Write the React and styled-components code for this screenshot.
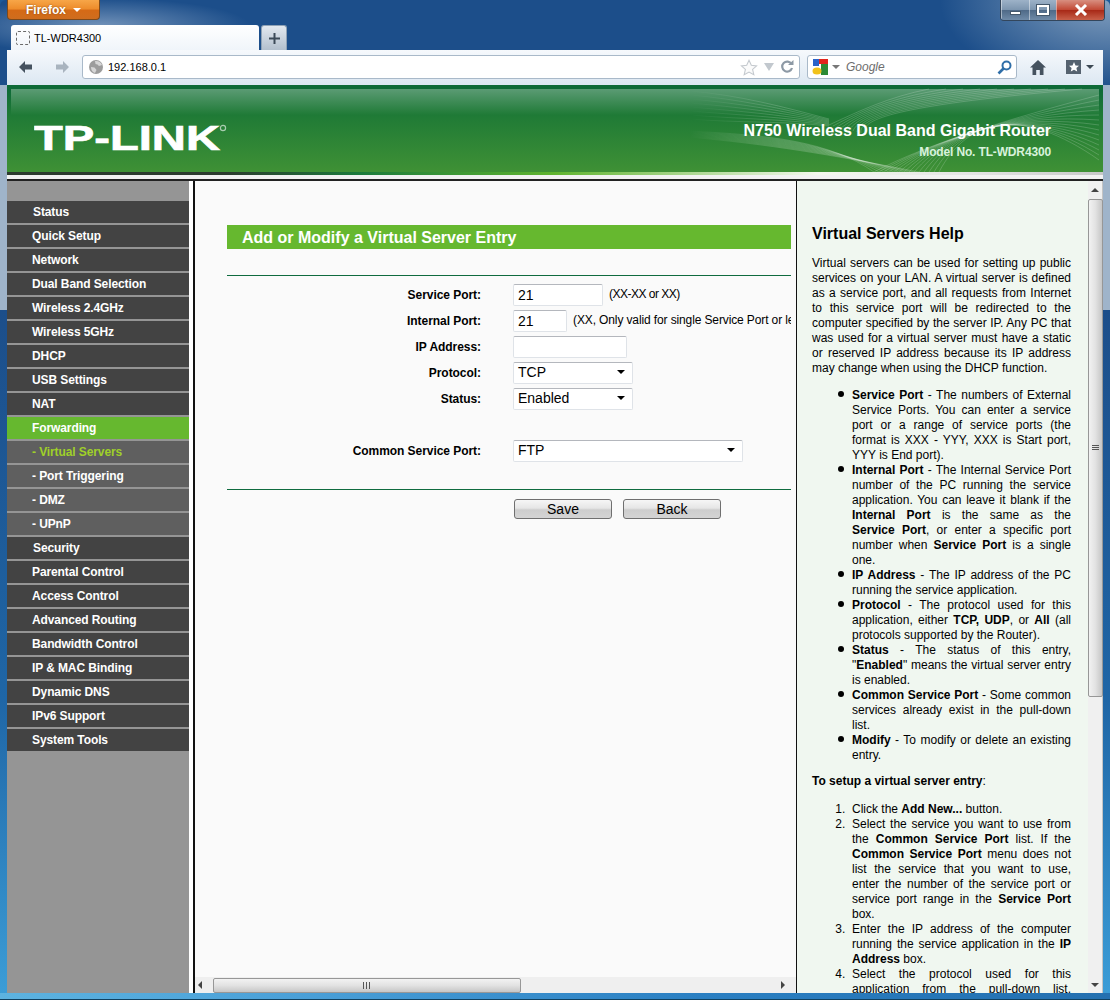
import React from 'react'
import styled, { createGlobalStyle } from 'styled-components'

const GlobalStyle = createGlobalStyle`
  html, body { margin: 0; padding: 0; background: #1c5a9a; }
  body { font-family: "Liberation Sans", Arial, sans-serif; font-size: 12px; color: #000; }
  * { box-sizing: border-box; }
`

const menuItems = [
  { label: 'Status', nudge: true },
  { label: 'Quick Setup' },
  { label: 'Network' },
  { label: 'Dual Band Selection' },
  { label: 'Wireless 2.4GHz' },
  { label: 'Wireless 5GHz' },
  { label: 'DHCP' },
  { label: 'USB Settings' },
  { label: 'NAT' },
  { label: 'Forwarding', kind: 'active' },
  { label: '- Virtual Servers', kind: 'current' },
  { label: '- Port Triggering', kind: 'sub' },
  { label: '- DMZ', kind: 'sub' },
  { label: '- UPnP', kind: 'sub' },
  { label: 'Security', nudge: true },
  { label: 'Parental Control' },
  { label: 'Access Control' },
  { label: 'Advanced Routing' },
  { label: 'Bandwidth Control' },
  { label: 'IP & MAC Binding' },
  { label: 'Dynamic DNS' },
  { label: 'IPv6 Support' },
  { label: 'System Tools' },
]

function App() {
  return (
    <Window>
      <GlobalStyle />
      <TitleRow>
        <FirefoxButton>Firefox<Caret $color="#fff" /></FirefoxButton>
        <CaptionButtons>
          <CaptionButton $width={28}><MinimizeGlyph /></CaptionButton>
          <CaptionButton $width={27}><RestoreGlyph /></CaptionButton>
          <CaptionButton $width={48} $close>
            <svg width="16" height="12" viewBox="0 0 16 12">
              <path d="M3 1 L13 11 M13 1 L3 11" stroke="#fff" strokeWidth="3" />
            </svg>
          </CaptionButton>
        </CaptionButtons>
      </TitleRow>

      <TabRow>
        <Tab><BlankFavicon />TL-WDR4300</Tab>
        <NewTab>
          <svg width="11" height="11" viewBox="0 0 11 11">
            <path d="M5.5 0 V11 M0 5.5 H11" stroke="#3c4a58" strokeWidth="2" />
          </svg>
        </NewTab>
      </TabRow>

      <NavBar>
        <NavArrow viewBox="0 0 14 12" width="14" height="12">
          <path d="M0 6 L6 0 V3.5 H13 V8.5 H6 V12 Z" fill="#45525f" />
        </NavArrow>
        <NavArrow viewBox="0 0 14 12" width="14" height="12">
          <path d="M14 6 L8 0 V3.5 H1 V8.5 H8 V12 Z" fill="#a9b4bf" />
        </NavArrow>
        <UrlBar>
          <svg width="14" height="14" viewBox="0 0 14 14">
            <circle cx="7" cy="7" r="7" fill="#9c9c9c" />
            <path d="M6 1 C9 0.5 12 2 13 5 L10 6 L8.5 4.5 L6.5 4 Z M2 7 L5.5 7.5 L7.5 10 L6 13 C3.5 12.5 2 10 2 7 Z" fill="#d6d6d6" />
          </svg>
          <UrlText>192.168.0.1</UrlText>
          <svg width="18" height="17" viewBox="0 0 20 19">
            <path d="M10 1.5 L12.6 7 L18.5 7.7 L14 11.7 L15.4 17.5 L10 14.6 L4.6 17.5 L6 11.7 L1.5 7.7 L7.4 7 Z" fill="#fbfbfb" stroke="#c4c9ce" strokeWidth="1.2" />
          </svg>
          <svg width="10" height="8" viewBox="0 0 10 8">
            <path d="M0 0 H10 L5 8 Z" fill="#c2c8ce" />
          </svg>
          <svg width="14" height="14" viewBox="0 0 14 14">
            <path d="M11.5 4 A5 5 0 1 0 12 8" fill="none" stroke="#8d99a5" strokeWidth="2.2" />
            <path d="M8 5 H13.5 V0 Z" fill="#8d99a5" />
          </svg>
        </UrlBar>
        <SearchBar>
          <svg width="16" height="16" viewBox="0 0 16 16">
            <rect x="6" y="0" width="10" height="5" fill="#e2241c" />
            <rect x="9" y="5" width="7" height="11" fill="#2c8a35" />
            <rect x="1" y="0" width="6" height="7" fill="#2a63c8" />
            <ellipse cx="5" cy="12" rx="4.5" ry="3.5" fill="#f1c21b" />
          </svg>
          <Caret $color="#777" />
          <SearchHint>Google</SearchHint>
          <svg width="15" height="15" viewBox="0 0 15 15">
            <circle cx="9.5" cy="5.5" r="4" fill="none" stroke="#2f6ea8" strokeWidth="2" />
            <path d="M6.5 8.5 L1.5 13.5" stroke="#2f6ea8" strokeWidth="2.6" />
          </svg>
        </SearchBar>
        <ToolIcons>
          <svg width="16" height="15" viewBox="0 0 16 15">
            <path d="M8 0 L16 7.5 H13.5 V15 H9.8 V10 H6.2 V15 H2.5 V7.5 H0 Z" fill="#45525f" />
          </svg>
          <BookmarkButton>
            <svg width="15" height="14" viewBox="0 0 15 14">
              <rect width="15" height="14" fill="#55626f" />
              <path d="M8 2 L9.5 5.4 L13 5.7 L10.4 8 L11.2 11.5 L8 9.7 L4.8 11.5 L5.6 8 L3 5.7 L6.5 5.4 Z" fill="#fff" />
            </svg>
            <Caret $color="#3d4954" />
          </BookmarkButton>
        </ToolIcons>
      </NavBar>

      <Banner>
        <Waves viewBox="0 0 410 87" width="410" height="87">
          {Array.from({ length: 14 }, (_, i) => (
            <path key={'a' + i} d={`M${185 + i * 5} 87 C${240 + i * 3} ${58 - i * 2}, ${320 + i} ${34 - i}, 410 ${10 + i * 5}`} />
          ))}
          {Array.from({ length: 10 }, (_, i) => (
            <path key={'b' + i} d={`M0 ${46 + i * 0.7} C80 ${50 + i}, 140 ${56 + i * 1.5}, ${185 + i * 5} 87`} />
          ))}
          {Array.from({ length: 8 }, (_, i) => (
            <path key={'c' + i} d={`M0 ${6 + i * 4} C50 ${10 + i * 4}, 95 ${22 + i * 2}, 140 ${34 + i}`} />
          ))}
          {Array.from({ length: 10 }, (_, i) => (
            <path key={'d' + i} d={`M${140 + i * 4} ${40 + i} C170 ${26 + i}, 200 ${12 + i}, ${240 + i * 17} 4`} />
          ))}
        </Waves>
        <Logo viewBox="0 0 200 30" width="200" height="30">
          <text x="0" y="27.5" textLength="186" lengthAdjust="spacingAndGlyphs" fontFamily="Liberation Sans, Arial, sans-serif" fontWeight="700" fontSize="35" fill="#fff" stroke="#fff" strokeWidth="0.7">TP-LINK</text>
          <circle cx="189" cy="6" r="2.6" fill="none" stroke="#a9cdb0" strokeWidth="1.2" />
        </Logo>
        <Product>
          <ProductName>N750 Wireless Dual Band Gigabit Router</ProductName>
          <ModelNo>Model No. TL-WDR4300</ModelNo>
        </Product>
      </Banner>
      <BannerEdge />
      <BannerGap />

      <Frames>
        <Menu>
          {menuItems.map((item) => (
            <MenuItem key={item.label} $kind={item.kind} $nudge={item.nudge}>{item.label}</MenuItem>
          ))}
        </Menu>

        <MainFrame>
          <MainContent>
            <EntryTitle>Add or Modify a Virtual Server Entry</EntryTitle>
            <Rule />
            <FormGrid>
              <FieldLabel>Service Port:</FieldLabel>
              <FieldCell>
                <TextInput $width={90} defaultValue="21" />
                <Hint $tight>(XX-XX or XX)</Hint>
              </FieldCell>
              <FieldLabel>Internal Port:</FieldLabel>
              <FieldCell>
                <TextInput $width={54} defaultValue="21" />
                <Hint>(XX, Only valid for single Service Port or leave blank)</Hint>
              </FieldCell>
              <FieldLabel>IP Address:</FieldLabel>
              <FieldCell><TextInput $width={114} /></FieldCell>
              <FieldLabel>Protocol:</FieldLabel>
              <FieldCell><SelectBox $width={120}>TCP<Caret $color="#000" /></SelectBox></FieldCell>
              <FieldLabel>Status:</FieldLabel>
              <FieldCell><SelectBox $width={120}>Enabled<Caret $color="#000" /></SelectBox></FieldCell>
              <BlankRow />
              <FieldLabel>Common Service Port:</FieldLabel>
              <FieldCell><SelectBox $width={230}>FTP<Caret $color="#000" /></SelectBox></FieldCell>
            </FormGrid>
            <Rule $gap={23} />
            <ButtonRow>
              <PageButton>Save</PageButton>
              <PageButton>Back</PageButton>
            </ButtonRow>
          </MainContent>
          <HScrollbar>
            <ArrowLeft />
            <HThumb><GripV /><GripV /><GripV /></HThumb>
            <HSpacer />
            <ArrowRight />
          </HScrollbar>
        </MainFrame>

        <HelpFrame>
          <HelpContent>
            <HelpTitle>Virtual Servers Help</HelpTitle>
            <HelpPara>
              Virtual servers can be used for setting up public services on your LAN. A virtual server is defined as a service port, and all requests from Internet to this service port will be redirected to the computer specified by the server IP. Any PC that was used for a virtual server must have a static or reserved IP address because its IP address may change when using the DHCP function.
            </HelpPara>
            <HelpBullets>
              <li><b>Service Port</b> - The numbers of External Service Ports. You can enter a service port or a range of service ports (the format is XXX - YYY, XXX is Start port, YYY is End port).</li>
              <li><b>Internal Port</b> - The Internal Service Port number of the PC running the service application. You can leave it blank if the <b>Internal Port</b> is the same as the <b>Service&nbsp;Port</b>, or enter a specific port number when <b>Service Port</b> is a single one.</li>
              <li><b>IP Address</b> - The IP address of the PC running the service application.</li>
              <li><b>Protocol</b> - The protocol used for this application, either <b>TCP, UDP</b>, or <b>All</b> (all protocols supported by the Router).</li>
              <li><b>Status</b> - The status of this entry, "<b>Enabled</b>" means the virtual server entry is enabled.</li>
              <li><b>Common Service Port</b> - Some common services already exist in the pull-down list.</li>
              <li><b>Modify</b> - To modify or delete an existing entry.</li>
            </HelpBullets>
            <HelpSubhead><b>To setup a virtual server entry</b>:</HelpSubhead>
            <HelpSteps>
              <li>Click the <b>Add New...</b> button.</li>
              <li>Select the service you want to use from the <b>Common Service Port</b> list. If the <b>Common Service Port</b> menu does not list the service that you want to use, enter the number of the service port or service port range in the <b>Service Port</b> box.</li>
              <li>Enter the IP address of the computer running the service application in the <b>IP Address</b> box.</li>
              <li>Select the protocol used for this application from the pull-down list, either&nbsp;TCP or UDP.</li>
            </HelpSteps>
          </HelpContent>
          <VScrollbar>
            <ArrowUp />
            <VThumb><GripH /><GripH /><GripH /></VThumb>
            <VSpacer />
            <ArrowDown />
          </VScrollbar>
        </HelpFrame>
      </Frames>
    </Window>
  )
}

export default App

const Window = styled.div`
  width: 1110px;
  height: 1000px;
  overflow: hidden;
  padding: 0 7px 7px;
  display: flex;
  flex-direction: column;
  border-radius: 6px 6px 0 0;
  background:
    linear-gradient(180deg, transparent 0, transparent 6px, #10405f 6px) 0 993px / 100% 7px no-repeat,
    linear-gradient(90deg, #5db3e0 0, #4aa0d8 300px, #2a7fc2 700px, #2470b0 1110px) 0 993px / 100% 7px no-repeat,
    linear-gradient(90deg, #9fb4ca 0, #9fb4ca 7px, transparent 7px, transparent 1103px, #9fb4ca 1103px) 0 85px / 100% 225px no-repeat,
    radial-gradient(ellipse 170px 90px at 100% 0, #86a2c0 0%, rgba(134,162,192,0) 100%),
    radial-gradient(ellipse 150px 28px at 100px 26px, rgba(150,175,205,.7) 0%, rgba(150,175,205,0) 100%),
    linear-gradient(180deg, #1c4e8a 0, #1c4e8a 310px, #1f66a6 700px, #3c9ed8 1000px);
`

const TitleRow = styled.div`
  height: 25px;
  flex: none;
  display: flex;
  justify-content: space-between;
  align-items: flex-start;
`

const FirefoxButton = styled.div`
  width: 93px;
  height: 20px;
  display: flex;
  align-items: center;
  justify-content: center;
  gap: 7px;
  color: #fff;
  font-weight: 700;
  font-size: 12px;
  border: 1px solid #7c4a1c;
  border-top: 0;
  border-radius: 0 0 4px 4px;
  background: linear-gradient(180deg, #f7a648 0, #ee8d2c 45%, #d56a16 55%, #cf6d1e 100%);
  text-shadow: 0 0 2px #8a4a10;
`

const Caret = styled.span`
  width: 0;
  height: 0;
  flex: none;
  border-left: 4px solid transparent;
  border-right: 4px solid transparent;
  border-top: 4px solid ${(p) => p.$color};
`

const CaptionButtons = styled.div`
  display: flex;
  height: 21px;
  margin-right: -2px;
  border: 1px solid #33465c;
  border-top: 0;
  border-radius: 0 0 4px 4px;
  overflow: hidden;
`

const CaptionButton = styled.div`
  width: ${(p) => p.$width}px;
  display: flex;
  align-items: center;
  justify-content: center;
  border-left: 1px solid rgba(255,255,255,.45);
  background: ${(p) => p.$close
    ? 'linear-gradient(180deg, #d88f80 0, #c24a36 48%, #a82a18 52%, #c8604a 100%)'
    : 'linear-gradient(180deg, #9db2c8 0, #7d96b0 48%, #4f6a88 52%, #6f8ba8 100%)'};
`

const MinimizeGlyph = styled.span`
  width: 11px;
  height: 4px;
  margin-top: 5px;
  background: #fff;
  border: 1px solid #44586c;
`

const RestoreGlyph = styled.span`
  width: 12px;
  height: 10px;
  border: 2px solid #fff;
  outline: 1px solid #44586c;
`

const TabRow = styled.div`
  height: 25px;
  flex: none;
  display: flex;
  align-items: flex-end;
  padding-left: 4px;
  gap: 2px;
`

const Tab = styled.div`
  width: 248px;
  height: 25px;
  display: flex;
  align-items: center;
  gap: 4px;
  padding-left: 5px;
  font-size: 11px;
  border-radius: 3px 3px 0 0;
  background: linear-gradient(180deg, #fff 0, #f0f5fa 100%);
`

const BlankFavicon = styled.span`
  width: 14px;
  height: 14px;
  border: 1px dashed #6a6a6a;
  border-radius: 2px;
`

const NewTab = styled.div`
  width: 26px;
  height: 25px;
  display: flex;
  align-items: center;
  justify-content: center;
  border-radius: 3px 3px 0 0;
  border: 1px solid #8fa2b6;
  border-bottom: 0;
  background: linear-gradient(180deg, #e2e8ef 0, #b3c0ce 100%);
`

const NavBar = styled.div`
  height: 35px;
  flex: none;
  display: flex;
  align-items: center;
  padding: 0 9px 1px 12px;
  background: linear-gradient(180deg, #f6f9fc 0, #dce7f2 100%);
`

const NavArrow = styled.svg`
  flex: none;
  margin-right: 22px;
  &:nth-of-type(2) { margin-right: 13px; }
`

const UrlBar = styled.div`
  width: 718px;
  height: 24px;
  flex: none;
  display: flex;
  align-items: center;
  gap: 6px;
  padding: 0 5px 0 6px;
  background: #fff;
  border: 1px solid #a9b9c9;
  border-radius: 3px;
`

const UrlText = styled.span`
  flex: 1;
  margin-left: -1px;
  font-size: 11px;
`

const SearchBar = styled.div`
  width: 210px;
  height: 24px;
  margin-left: 7px;
  flex: none;
  display: flex;
  align-items: center;
  gap: 4px;
  padding: 0 4px 0 4px;
  background: #fff;
  border: 1px solid #a9b9c9;
  border-radius: 3px;
`

const SearchHint = styled.span`
  flex: 1;
  margin-left: 2px;
  font-style: italic;
  font-size: 12px;
  color: #6d6d6d;
`

const ToolIcons = styled.div`
  display: flex;
  align-items: center;
  margin-left: 13px;
  gap: 20px;
`

const BookmarkButton = styled.div`
  display: flex;
  align-items: center;
  gap: 5px;
`

const Banner = styled.div`
  position: relative;
  height: 87px;
  flex: none;
  display: flex;
  align-items: flex-start;
  justify-content: space-between;
  padding: 37px 52px 0 27px;
  overflow: hidden;
  background:
    linear-gradient(180deg, #5b9b74 0, #1f7a36 100%) 4px 4px / calc(100% - 8px) 26px no-repeat,
    linear-gradient(180deg, #0e6a37 0, #0e6a37 4px, #1f7a36 30px, #3f9135 100%);
`

const Waves = styled.svg`
  position: absolute;
  top: 0;
  right: 4px;
  fill: none;
  stroke: rgba(255,255,255,.18);
  stroke-width: 1;
  mask-image: linear-gradient(90deg, transparent 0, #000 90px);
`

const Logo = styled.svg`
  position: relative;
  flex: none;
`

const Product = styled.div`
  position: relative;
  display: flex;
  flex-direction: column;
  align-items: flex-end;
  gap: 5px;
  color: #fff;
  font-weight: 700;
`

const ProductName = styled.div`
  font-size: 16px;
  line-height: 18px;
`

const ModelNo = styled.div`
  font-size: 12px;
  line-height: 14px;
  letter-spacing: -0.15px;
  color: #d8f2dc;
`

const BannerEdge = styled.div`
  height: 3px;
  flex: none;
  background: linear-gradient(90deg, #2c3a2e 0, #2c3a2e 20%, #1b7a3c 32%, #60b42e 50%, #f4f8ee 74%, #e4e4e4 88%, #c8c8c8 100%);
`

const BannerGap = styled.div`
  height: 6px;
  flex: none;
  background: #f2f2f2;
  border-bottom: 2px solid #222;
`

const Frames = styled.div`
  flex: 1;
  min-height: 0;
  display: flex;
  background: #fff;
`

const Menu = styled.nav`
  width: 182px;
  flex: none;
  padding-top: 20px;
  background: #959595;
`

const menuBackground = { active: '#66b82f', current: '#5f5f5f', sub: '#5f5f5f' }

const MenuItem = styled.div`
  height: 22px;
  margin-bottom: 2px;
  display: flex;
  align-items: center;
  padding-left: ${(p) => (p.$nudge ? 26 : 25)}px;
  font-weight: 700;
  font-size: 12px;
  letter-spacing: -0.1px;
  color: ${(p) => (p.$kind === 'current' ? '#9fd029' : '#fff')};
  background: ${(p) => menuBackground[p.$kind] || '#434343'};
`

const MainFrame = styled.div`
  width: 604px;
  flex: none;
  display: flex;
  flex-direction: column;
  margin-left: 4px;
  border-left: 2px solid #111;
  border-right: 1px solid #111;
  background: #fafafa;
`

const MainContent = styled.div`
  flex: 1;
  min-height: 0;
  overflow: hidden;
  padding: 44px 5px 0 32px;
`

const EntryTitle = styled.h1`
  margin: 0 0 26px;
  height: 24px;
  padding: 1px 0 0 15px;
  font-size: 16px;
  line-height: 24px;
  font-weight: 700;
  color: #fff;
  background: #66b82f;
`

const Rule = styled.div`
  height: 1px;
  margin-top: ${(p) => p.$gap || 0}px;
  background: #0f6b3f;
`

const FormGrid = styled.div`
  margin-top: 8px;
  display: grid;
  grid-template-columns: 254px minmax(0, 1fr);
  column-gap: 32px;
  grid-auto-rows: 26px;
`

const FieldLabel = styled.div`
  height: 22px;
  display: flex;
  align-items: center;
  justify-content: flex-end;
  font-weight: 700;
  font-size: 12px;
  letter-spacing: -0.05px;
`

const FieldCell = styled.div`
  display: flex;
  align-items: flex-start;
  gap: 6px;
  min-width: 0;
  overflow: hidden;
  white-space: nowrap;
`

const BlankRow = styled.div`
  grid-column: 1 / -1;
`

const TextInput = styled.input`
  width: ${(p) => p.$width}px;
  height: 22px;
  flex: none;
  padding: 0 4px 1px;
  font: 14px "Liberation Sans", Arial, sans-serif;
  background: #fff;
  border: 1px solid #dfe3e8;
  border-top-color: #b4b7bd;
  border-radius: 2px;
  outline: none;
`

const Hint = styled.span`
  font-size: 12px;
  line-height: 20px;
  letter-spacing: ${(p) => (p.$tight ? -0.5 : -0.12)}px;
`

const SelectBox = styled.div`
  width: ${(p) => p.$width}px;
  height: 22px;
  display: flex;
  align-items: center;
  justify-content: space-between;
  padding: 0 7px 2px 4px;
  font-size: 14px;
  background: #fff;
  border: 1px solid #dfe3e8;
  border-top-color: #b4b7bd;
  border-radius: 2px;
`

const ButtonRow = styled.div`
  display: flex;
  gap: 11px;
  margin: 9px 0 0 287px;
`

const PageButton = styled.div`
  width: 98px;
  height: 20px;
  display: flex;
  align-items: center;
  justify-content: center;
  font-size: 14px;
  border: 1px solid #6f6f6f;
  border-radius: 3px;
  background: linear-gradient(180deg, #f6f6f6 0, #e6e6e6 45%, #cdcdcd 55%, #d4d4d4 100%);
`

const HScrollbar = styled.div`
  height: 16px;
  flex: none;
  display: flex;
  align-items: center;
  background: #efefef;
`

const ArrowLeft = styled.span`
  width: 0;
  flex: none;
  height: 0;
  margin: 0 11px 0 3px;
  border-right: 4px solid #444;
  border-top: 4px solid transparent;
  border-bottom: 4px solid transparent;
`

const ArrowRight = styled.span`
  width: 15px;
  flex: none;
  height: 0;
  border-left: 4px solid #444;
  border-top: 4px solid transparent;
  border-bottom: 4px solid transparent;
`

const HThumb = styled.div`
  width: 308px;
  height: 15px;
  flex: none;
  display: flex;
  align-items: center;
  justify-content: center;
  gap: 1px;
  border: 1px solid #979797;
  border-radius: 2px;
  background: linear-gradient(180deg, #f2f2f2 0, #e2e2e2 50%, #c6c6c6 100%);
`

const GripV = styled.span`
  width: 1px;
  height: 7px;
  margin-right: 1px;
  background: #555;
`

const HSpacer = styled.div`
  flex: 1;
`

const HelpFrame = styled.div`
  flex: 1;
  min-width: 0;
  display: flex;
  background: #f0f7f0;
`

const HelpContent = styled.div`
  flex: 1;
  min-width: 0;
  overflow: hidden;
  padding: 44px 17px 0 15px;
  line-height: 15px;
  font-size: 12px;
  text-align: justify;
`

const HelpTitle = styled.h2`
  margin: 0 0 13px;
  font-size: 16px;
  line-height: 18px;
  font-weight: 700;
  text-align: left;
`

const HelpPara = styled.p`
  margin: 0 0 12px;
`

const HelpBullets = styled.ul`
  margin: 0 0 11px;
  padding-left: 40px;
  list-style: none;

  li { position: relative; }
  li::before {
    content: "";
    position: absolute;
    left: -14px;
    top: 3px;
    width: 6px;
    height: 6px;
    border-radius: 50%;
    background: #000;
  }
`

const HelpSubhead = styled.p`
  margin: 0 0 13px;
`

const HelpSteps = styled.ol`
  margin: 0;
  padding-left: 40px;
  li::marker { content: counter(list-item) ".\\00a0\\00a0"; }
`

const VScrollbar = styled.div`
  width: 15px;
  flex: none;
  display: flex;
  flex-direction: column;
  align-items: center;
  background: #f0f0f0;
  border-right: 1px solid #c4c4c4;
`

const ArrowUp = styled.span`
  flex: none;
  width: 0;
  height: 0;
  margin: 7px 0 7px;
  border-left: 4px solid transparent;
  border-right: 4px solid transparent;
  border-bottom: 4px solid #444;
`

const ArrowDown = styled.span`
  flex: none;
  width: 0;
  height: 0;
  margin-bottom: 6px;
  border-left: 4px solid transparent;
  border-right: 4px solid transparent;
  border-top: 4px solid #444;
`

const VThumb = styled.div`
  width: 15px;
  height: 498px;
  flex: none;
  display: flex;
  flex-direction: column;
  align-items: center;
  justify-content: center;
  border: 1px solid #979797;
  border-radius: 2px;
  background: linear-gradient(90deg, #f2f2f2 0, #e2e2e2 50%, #c6c6c6 100%);
`

const GripH = styled.span`
  width: 7px;
  height: 1px;
  margin-bottom: 1px;
  background: #555;
`

const VSpacer = styled.div`
  flex: 1;
`
